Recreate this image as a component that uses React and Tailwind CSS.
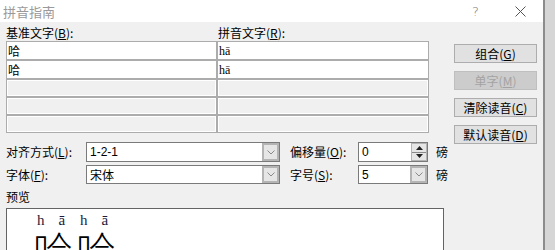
import React from "react";

const cjk = "font-['Noto_Sans_CJK_SC',sans-serif]";
const serif = "font-['Liberation_Serif','DejaVu_Serif',serif]";

function Chevron() {
  return (
    <svg width="8" height="5" viewBox="0 0 8 5">
      <path d="M0.5 0.5 L4 4 L7.5 0.5" fill="none" stroke="#8a8a8a" strokeWidth="1" />
    </svg>
  );
}

function Combo({ value, className, latin }) {
  return (
    <div className={`flex shrink-0 border border-[#7a7a7a] bg-white ${className}`}>
      <div className={`flex-1 pl-[3px] flex items-center leading-none ${latin ? "font-['Liberation_Sans',sans-serif] text-[12px]" : ""}`}>
        {value}
      </div>
      <div className="w-[17px] flex items-center justify-center bg-[#e6e6e6] border-2 border-[#b4b4b4]">
        <Chevron />
      </div>
    </div>
  );
}

function Spin({ value }) {
  return (
    <div className="flex shrink-0 w-[70px] h-[20px] border border-[#7a7a7a] bg-white">
      <div className="flex-1 pl-[3px] flex items-center leading-none font-['Liberation_Sans',sans-serif]">{value}</div>
      <div className="w-[16px] flex flex-col bg-[#e6e6e6] border border-[#b4b4b4]">
        <div className="flex-1 flex items-center justify-center border-b border-[#8a8a8a]">
          <svg width="7" height="4" viewBox="0 0 7 4"><path d="M3.5 0 L7 4 L0 4 Z" fill="#222" /></svg>
        </div>
        <div className="flex-1 flex items-center justify-center">
          <svg width="7" height="4" viewBox="0 0 7 4"><path d="M0 0 L7 0 L3.5 4 Z" fill="#222" /></svg>
        </div>
      </div>
    </div>
  );
}

function Btn({ children, disabled }) {
  return (
    <div
      className={`w-[83px] h-[19px] flex items-center justify-center leading-none border ${
        disabled ? "bg-[#cccccc] border-[#bfbfbf] text-[#a3a3a3]" : "bg-[#e1e1e1] border-[#adadad] text-black"
      }`}
    >
      {children}
    </div>
  );
}

export default function App() {
  const rows = [
    { base: "哈", py: "hā" },
    { base: "哈", py: "hā" },
    null,
    null,
    null,
  ];

  return (
    <div className={`w-[555px] h-[250px] overflow-hidden flex bg-[#d6d6d6] ${cjk} text-[12px] text-black`}>
      <div className="w-[545px] h-[250px] flex flex-col bg-[#f0f0f0] border-r-2 border-[#8c8c8c]">
        {/* Title bar */}
        <div className="h-[22px] shrink-0 bg-white flex items-center pl-[3px] text-[#9a9a9a] text-[13px] leading-none">
          <span>拼音指南</span>
          <span className="ml-[417px] text-[#7a7a7a] font-['DejaVu_Sans',sans-serif] text-[13px] font-light">?</span>
          <svg className="ml-[36px]" width="11" height="11" viewBox="0 0 11 11">
            <path d="M0.5 0.5 L10.5 10.5 M10.5 0.5 L0.5 10.5" stroke="#555" strokeWidth="1" />
          </svg>
        </div>

        <div className="pl-[6px] flex flex-col flex-1 min-h-0">
          <div className="flex shrink-0 mt-[3px]">
            {/* Left: table + option rows */}
            <div className="w-[442px] flex flex-col">
              <div className="flex h-[16px] items-center leading-none">
                <div className="w-[212px]">基准文字(<span className="underline">B</span>):</div>
                <div>拼音文字(<span className="underline">R</span>):</div>
              </div>
              <div className="w-[423px] grid grid-cols-[209px_210px] grid-rows-[17px_17px_16px_16px_16px] gap-[2px] p-px bg-[#acacac]">
                {rows.map((r, i) =>
                  r ? (
                    <React.Fragment key={i}>
                      <div className="bg-white pl-[1px] flex items-center leading-none">{r.base}</div>
                      <div className={`bg-white pl-[1px] flex items-center leading-none ${serif} text-[12px]`}>{r.py}</div>
                    </React.Fragment>
                  ) : (
                    <React.Fragment key={i}>
                      <div className="bg-[#f0f0f0] border border-white" />
                      <div className="bg-[#f0f0f0] border border-white" />
                    </React.Fragment>
                  )
                )}
              </div>

              {/* Alignment / offset */}
              <div className="flex items-center mt-[9px] h-[20px] leading-none">
                <div className="w-[80px]">对齐方式(<span className="underline">L</span>):</div>
                <Combo value="1-2-1" latin className="w-[194px] h-[20px]" />
                <div className="ml-[10px] w-[68px]">偏移量(<span className="underline">O</span>):</div>
                <Spin value="0" />
                <div className="ml-[8px]">磅</div>
              </div>

              {/* Font / size */}
              <div className="flex items-center mt-[3px] h-[19px] leading-none">
                <div className="w-[80px]">字体(<span className="underline">F</span>):</div>
                <Combo value="宋体" className="w-[194px] h-[19px]" />
                <div className="ml-[10px] w-[68px]">字号(<span className="underline">S</span>):</div>
                <Combo value="5" latin className="w-[70px] h-[19px]" />
                <div className="ml-[8px]">磅</div>
              </div>
            </div>

            {/* Right: buttons */}
            <div className="ml-[6px] pt-[19px] flex flex-col gap-[8px]">
              <Btn>组合(<span className="underline">G</span>)</Btn>
              <Btn disabled>单字(<span className="underline">M</span>)</Btn>
              <Btn>清除读音(<span className="underline">C</span>)</Btn>
              <Btn>默认读音(<span className="underline">D</span>)</Btn>
            </div>
          </div>

          <div className="mt-[5px] h-[16px] shrink-0 flex items-center leading-none">预览</div>

          {/* Preview */}
          <div className="mt-[3px] w-[438px] h-[60px] shrink-0 overflow-hidden border border-[#646464] bg-white pl-[26px] pt-[2px]">
            <div className="flex">
              {["哈", "哈"].map((c, i) => (
                <div key={i} className="w-[43px] flex flex-col">
                  <div className={`h-[18px] flex pl-[4px] gap-[14px] ${serif} text-[15px] leading-[18px] text-[#1c1c3c]`}>
                    <span>h</span>
                    <span>ā</span>
                  </div>
                  <div className="text-[40px] leading-[40px] font-light">{c}</div>
                </div>
              ))}
            </div>
          </div>
        </div>
      </div>
    </div>
  );
}
